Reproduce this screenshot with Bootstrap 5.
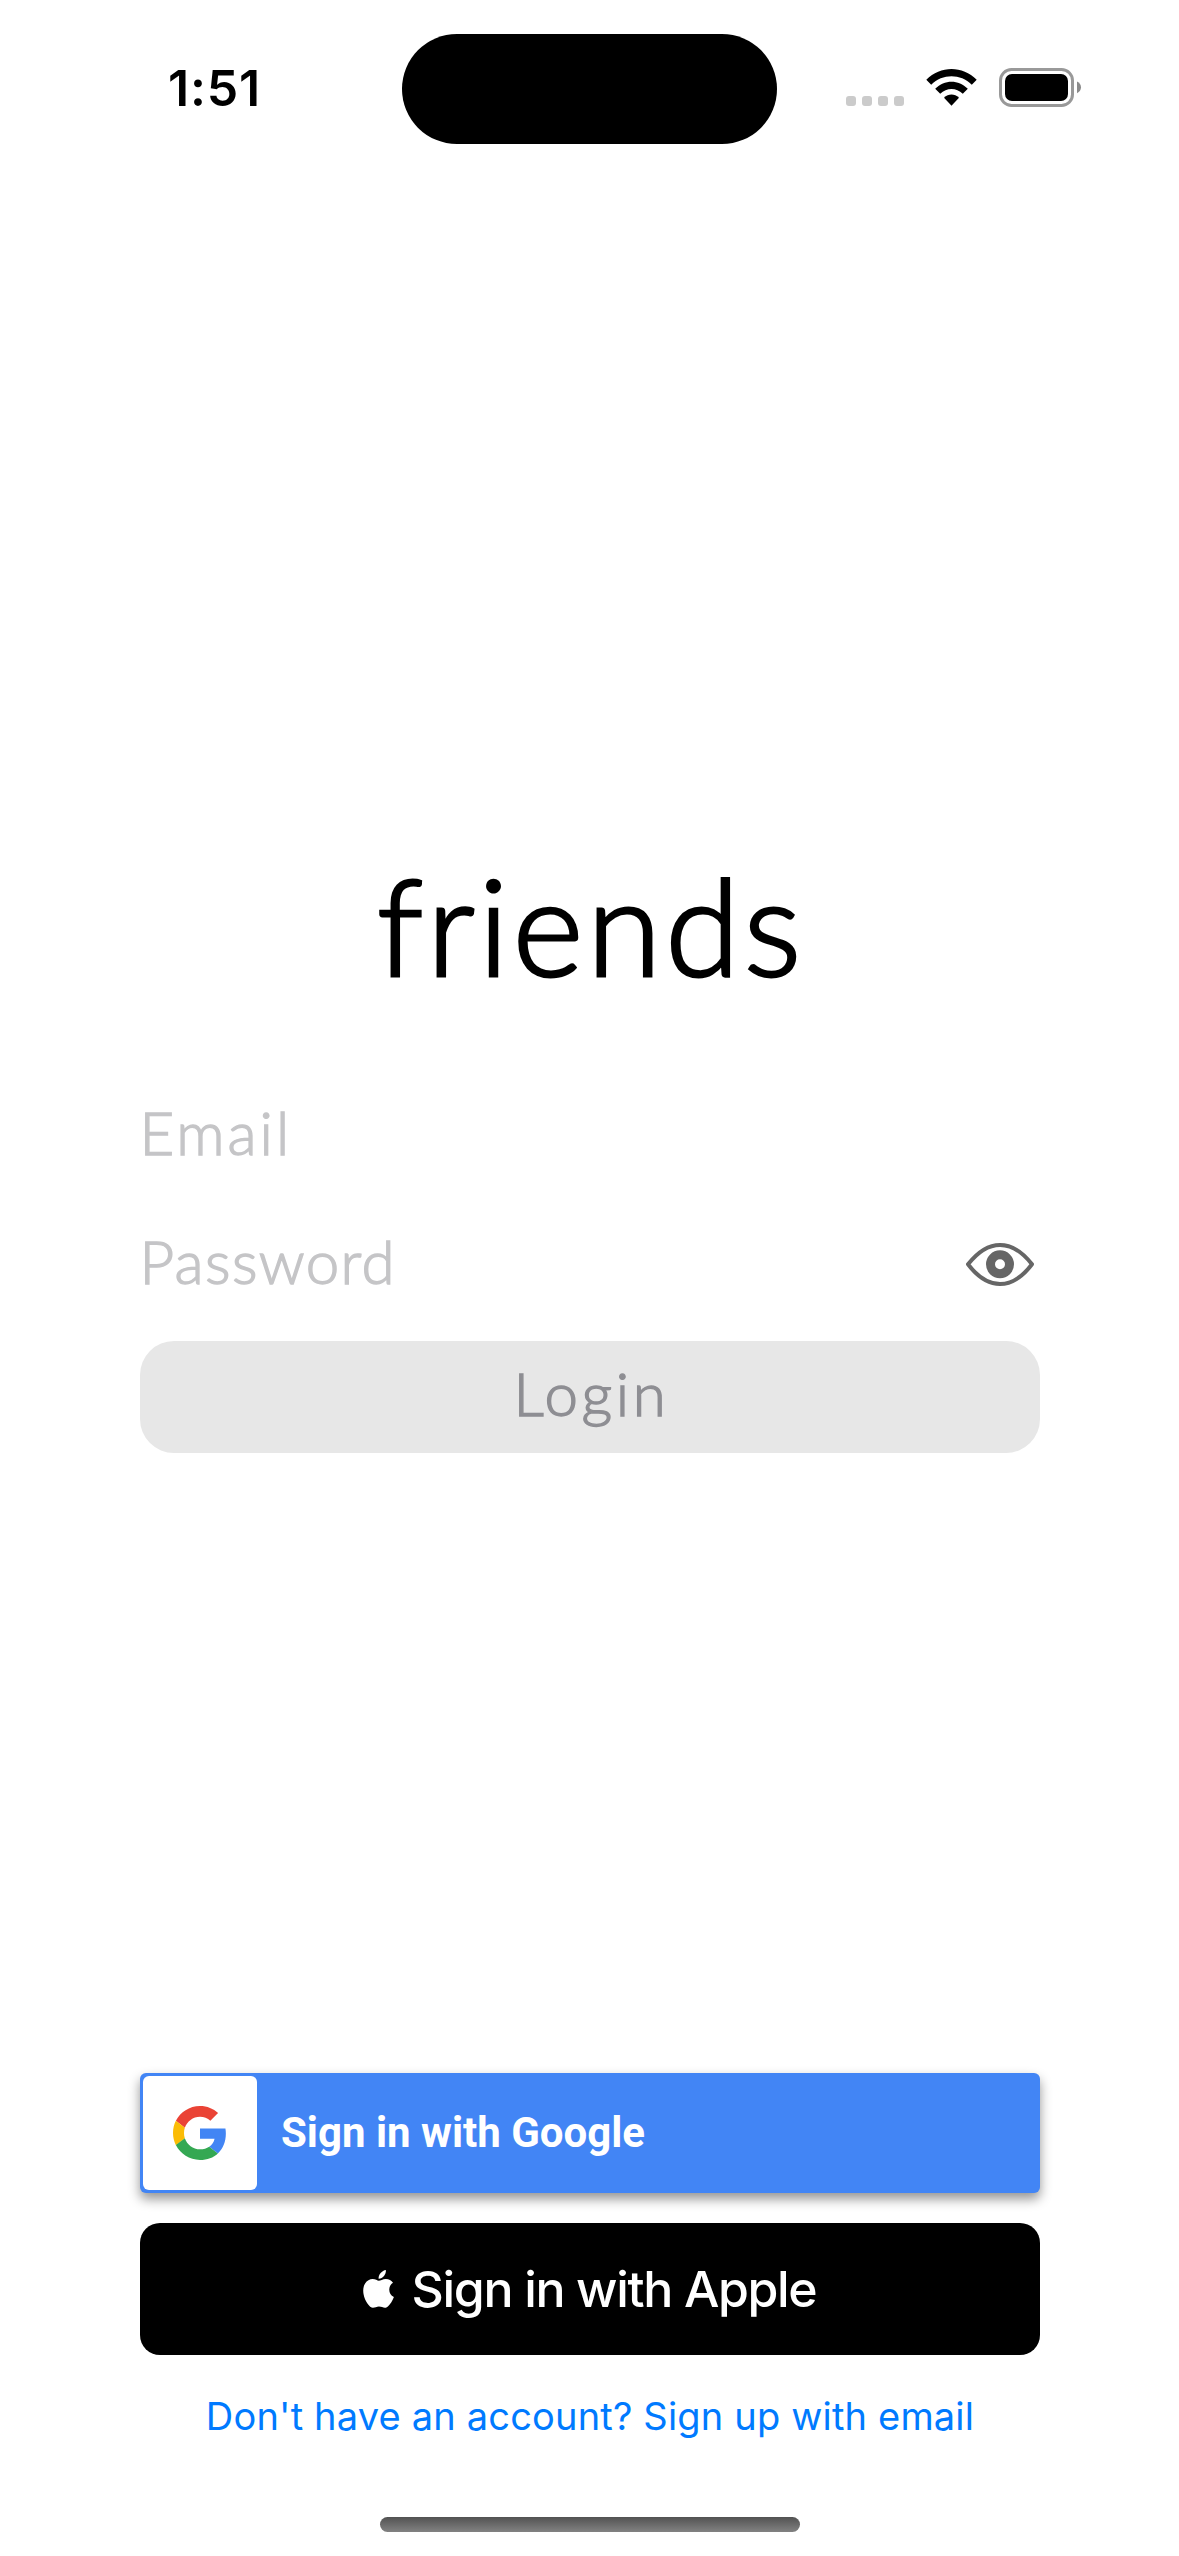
<!DOCTYPE html>
<html lang="en">
<head>
<meta charset="utf-8">
<meta name="viewport" content="width=device-width, initial-scale=1">
<title>friends</title>
<link rel="stylesheet" href="https://cdn.jsdelivr.net/npm/bootstrap@5.3.0/dist/css/bootstrap.min.css">
<style>
body{margin:0;height:2556px;overflow:hidden;font-family:Inter,"Liberation Sans",sans-serif;color:#000;background:#fff}
svg{display:block;flex:none}
.status-bar{height:177px;padding:33.5px 97px 0 168px}
.status-time{width:234px;height:110px;padding-top:24.5px;font-size:50px;font-weight:600;line-height:60px;letter-spacing:.8px}
.island{width:375px;height:110.5px;border-radius:56px;background:#000}
.status-icons{padding-top:33.5px}
.column-main{width:900px;margin:0 auto}
.brand{margin:669px 0 94px;padding-left:3px;font:300 135px/156px Lato,sans-serif;letter-spacing:4px;-webkit-text-stroke:3px #000}
.field,.field:focus{height:72px;padding:0;border:0;border-radius:0;box-shadow:none;background:transparent;font:300 60px/72px Lato,sans-serif}
.field::placeholder{color:#c5c5c7;opacity:1;-webkit-text-stroke:1.4px #c5c5c7}
.field-email{letter-spacing:3px}
.field-password{letter-spacing:1.4px}
.password-row{margin-top:57px}
.eye-icon{margin:6px 4px 0 0}
.login{height:112px;margin-top:44px;padding:16px 0 24px 4px;border:0;border-radius:34px;font:300 60px/72px Lato,sans-serif;letter-spacing:3.6px;-webkit-text-stroke:1.4px #8e8e93}
.login:disabled{opacity:1;background:#e7e7e7;color:#8e8e93}
.google{height:120px;margin-top:620px;padding:3px;border:0;border-radius:6px;background:#4285f5;color:#fff;box-shadow:0 6px 12px rgba(0,0,0,.42);font:700 42px/50px Roboto,sans-serif}
.google:hover{background:#4285f5;color:#fff}
.google-tile{width:114px;height:114px;border-radius:6px;background:#fff;margin-right:24.5px}
.apple{height:132px;margin-top:30px;padding:0;border:0;border-radius:20px;background:#000;color:#fff;font-size:50px;font-weight:500;line-height:60px;letter-spacing:-1.35px}
.signup{margin-top:38px;padding-left:1px;font-size:38px;line-height:46px;letter-spacing:.18px;color:#007aff}
.home-bar{width:420px;height:15px;margin:auto auto 24px;border-radius:8px;background:linear-gradient(#525252,#828282)}
</style>
</head>
<body class="d-flex flex-column">
<header class="status-bar d-flex align-items-start">
  <div class="status-time">1:51</div>
  <div class="island"></div>
  <div class="status-icons d-flex ms-auto">
    <svg width="236" height="41" viewBox="846 67 236 41" aria-hidden="true">
      <g fill="#cbcbcb"><rect x="846" y="96" width="10" height="10" rx="3"/><rect x="862" y="96" width="10" height="10" rx="3"/><rect x="878" y="96" width="10" height="10" rx="3"/><rect x="894" y="96" width="10" height="10" rx="3"/></g>
      <path d="M926.3 79.8C940.5 65.4 962.500 65.400 976.700 79.800L971.800 84.700C960.500 73.500 942.500 73.500 931.200 84.700Z"/>
      <path d="M935.200 88.800C944.500 79.400 958.500 79.400 967.800 88.800L962.800 93.800C956.300 87.300 946.700 87.300 940.200 93.800Z"/>
      <path d="M944 97.700C948.500 93.300 954.500 93.300 959 97.700L951.500 105.800Z"/>
      <rect x="1000.500" y="69.500" width="72" height="36" rx="11" fill="none" stroke="#999" stroke-width="3"/>
      <rect x="1005" y="74" width="63" height="27" rx="7"/>
      <path fill="#8b8b8b" d="M1077 81.500C1082.300 83.600 1082.300 91.100 1077 93.200Z"/>
    </svg>
  </div>
</header>
<main class="column-main d-flex flex-column">
  <h1 class="brand text-center">friends</h1>
  <form>
    <input class="form-control field field-email" type="email" placeholder="Email" aria-label="Email">
    <div class="input-group flex-nowrap align-items-center password-row">
      <input class="form-control field field-password" type="password" placeholder="Password" aria-label="Password">
      <svg class="eye-icon" width="72" height="46" viewBox="964 1241 72 46" aria-hidden="true">
        <path d="M968 1264.300C980 1249 991 1244.900 1000 1244.900S1020 1249 1032 1264.300C1020 1280 1009 1284 1000 1284S980 1280 968 1264.300Z" fill="none" stroke="#666" stroke-width="4" stroke-linejoin="round"/>
        <circle cx="1000" cy="1264.300" r="9.500" fill="none" stroke="#666" stroke-width="9"/>
      </svg>
    </div>
    <button class="btn w-100 login" type="button" disabled>Login</button>
  </form>
  <button class="btn google d-flex align-items-center text-start" type="button">
    <span class="google-tile d-flex align-items-center justify-content-center">
      <svg width="54" height="54" viewBox="0 0 48 48" aria-hidden="true">
        <path fill="#EA4335" d="M24 9.500c3.540 0 6.710 1.220 9.210 3.600l6.850-6.850C35.900 2.380 30.470 0 24 0 14.620 0 6.510 5.380 2.560 13.220l7.980 6.190C12.430 13.720 17.740 9.500 24 9.500z"/>
        <path fill="#4285F4" d="M46.980 24.550c0-1.570-.15-3.090-.38-4.550H24v9.020h12.940c-.58 2.960-2.260 5.480-4.780 7.180l7.730 6c4.510-4.180 7.090-10.360 7.090-17.650z"/>
        <path fill="#FBBC05" d="M10.530 28.590c-.48-1.450-.76-2.990-.76-4.590s.27-3.140.76-4.590l-7.980-6.190C.92 16.460 0 20.120 0 24c0 3.880.92 7.540 2.560 10.780l7.970-6.190z"/>
        <path fill="#34A853" d="M24 48c6.480 0 11.930-2.130 15.890-5.810l-7.730-6c-2.150 1.450-4.920 2.300-8.160 2.300-6.260 0-11.570-4.220-13.470-9.910l-7.980 6.190C6.510 42.620 14.620 48 24 48z"/>
      </svg>
    </span>
    <span>Sign in with Google</span>
  </button>
  <button class="btn apple d-flex align-items-center justify-content-center" type="button">
    <svg width="31" height="38" viewBox="362.700 2269 31 38" fill="#fff" style="margin-right:18px" aria-hidden="true">
      <path d="M385.600 2269C386 2273.300 382.500 2277.800 378.300 2277.700C377.900 2273.800 381.700 2269.500 385.600 2269Z"/>
      <path d="M378.500 2279.800C380.200 2279.800 382.300 2278 385.600 2278C388.500 2278 391.300 2279.500 392.700 2281.700C387.500 2285 387.700 2293.300 393.600 2295.900C392.500 2299.200 390 2303.200 387.600 2305.500C384.500 2308.300 382 2305.500 378.700 2305.500C375.300 2305.500 373 2308.300 369.900 2305.700C363.500 2299.800 360.800 2288.500 364.800 2282.500C366.600 2279.700 369.500 2278.100 372.300 2278.100C375.100 2278.100 377 2279.800 378.500 2279.800Z"/>
    </svg>
    <span>Sign in with Apple</span>
  </button>
  <a class="signup text-center text-decoration-none" href="#">Don't have an account? Sign up with email</a>
</main>
<div class="home-bar"></div>
<script src="https://cdn.jsdelivr.net/npm/bootstrap@5.3.0/dist/js/bootstrap.bundle.min.js"></script>
</body>
</html>
